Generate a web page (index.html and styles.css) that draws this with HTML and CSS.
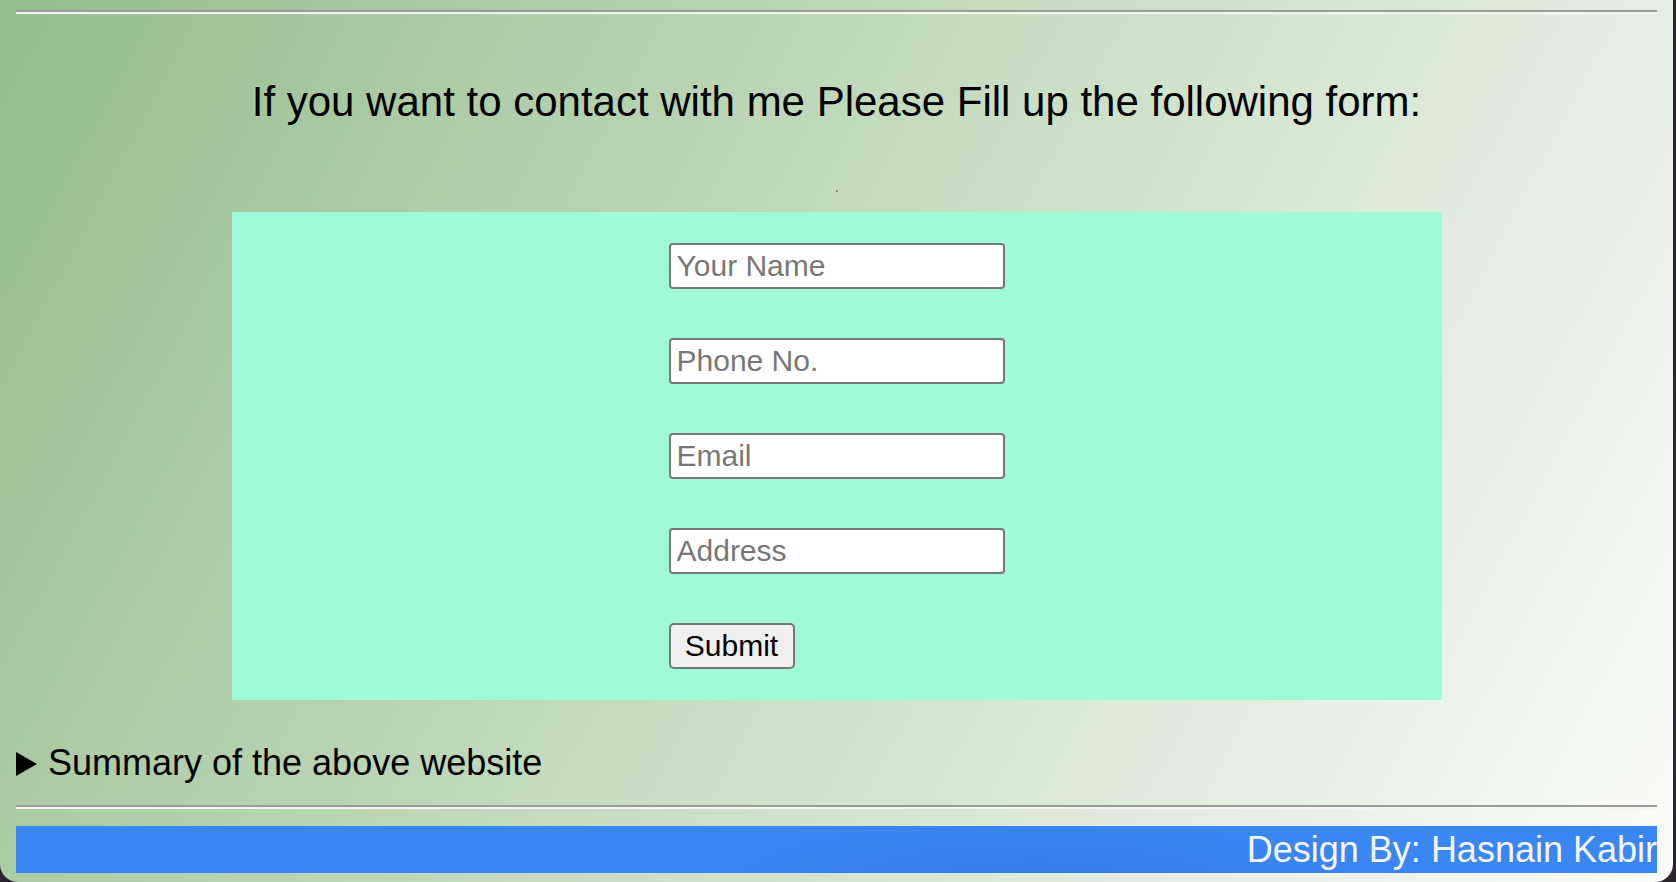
FILE: index.html
```html
<!DOCTYPE html>
<html lang="en">
<head>
<meta charset="utf-8">
<title>Contact</title>
<link rel="stylesheet" href="styles.css">
</head>
<body>
<div class="window">
  <hr class="rule rule-top">
  <h2 class="title">If you want to contact with me Please Fill up the following form:</h2>
  <div class="pic"><span class="pic-dot"></span></div>
  <div class="panel">
    <form class="contact">
      <input class="field" type="text" placeholder="Your Name">
      <input class="field" type="text" placeholder="Phone No.">
      <input class="field" type="text" placeholder="Email">
      <input class="field" type="text" placeholder="Address">
      <button class="submit" type="button">Submit</button>
    </form>
  </div>
  <details class="details">
    <summary class="summary"><span class="tri"></span><span class="summary-text">Summary of the above website</span></summary>
  </details>
  <hr class="rule rule-bottom">
  <div class="credit"><span class="credit-text">Design By: Hasnain Kabir</span></div>
</div>
</body>
</html>
```
FILE: styles.css
```css
html {
  background: #2b2430;
}
body {
  margin: 0;
  overflow: hidden;
  font-family: "Liberation Sans", Arial, sans-serif;
}
.window {
  width: 1673px;
  height: 882px;
  box-sizing: border-box;
  padding: 0 16px;
  overflow: hidden;
  background: linear-gradient(118deg, #93bd8b 0%, #c9dec4 50%, #fbfcfa 100%);
  border-radius: 0 0 18px 18px;
}
.rule {
  margin: 0;
  height: 0;
  border: 0;
  border-top: 2px solid #9b9b9b;
  border-bottom: 2px solid #f2f5f0;
}
.rule-top {
  margin-top: 10px;
}
.title {
  margin: 64px 0 0;
  font-size: 42px;
  line-height: 48px;
  font-weight: normal;
  text-align: center;
  color: #000;
}
.pic {
  margin-top: 64px;
  height: 2px;
  display: flex;
  justify-content: center;
}
.pic-dot {
  width: 2px;
  height: 2px;
  background: #8c8c94;
}
.panel {
  margin: 20px auto 0;
  width: 1210px;
  box-sizing: border-box;
  padding: 31px 0;
  background: #a1fad7;
  display: flex;
  justify-content: center;
}
.contact {
  width: 336px;
  display: flex;
  flex-direction: column;
  align-items: flex-start;
  gap: 49px;
}
.field {
  width: 336px;
  height: 46px;
  box-sizing: border-box;
  margin: 0;
  padding: 0 6px;
  border: 2px solid #777;
  border-radius: 4px;
  background: #fff;
  font-family: "Liberation Sans", Arial, sans-serif;
  font-size: 30px;
  color: #000;
  outline: none;
}
.field::placeholder {
  color: #777;
}
.submit {
  width: 126px;
  height: 46px;
  box-sizing: border-box;
  margin: 0;
  padding: 0;
  border: 2px solid #777;
  border-radius: 5px;
  background: #efefef;
  font-family: "Liberation Sans", Arial, sans-serif;
  font-size: 30px;
  color: #000;
}
.details {
  margin-top: 42px;
}
.summary {
  display: flex;
  align-items: center;
  height: 42px;
  list-style: none;
  font-size: 36px;
  line-height: 42px;
  color: #000;
  cursor: pointer;
}
.summary::-webkit-details-marker {
  display: none;
}
.summary::marker {
  content: "";
}
.tri {
  width: 0;
  height: 0;
  border-left: 21px solid #000;
  border-top: 12px solid transparent;
  border-bottom: 12px solid transparent;
  margin-right: 11px;
  margin-top: 2px;
}
.rule-bottom {
  margin-top: 21px;
}
.credit {
  margin-top: 17px;
  height: 47px;
  display: flex;
  justify-content: flex-end;
  overflow: hidden;
  white-space: nowrap;
  background: radial-gradient(ellipse 320px 60px at 62% 110%, rgba(20, 40, 120, 0.12), rgba(20, 40, 120, 0) 100%), #3a86f3;
  font-size: 36px;
  line-height: 47px;
  color: #f4f7fc;
}
.credit-text {
  margin-right: 0;
}
```
